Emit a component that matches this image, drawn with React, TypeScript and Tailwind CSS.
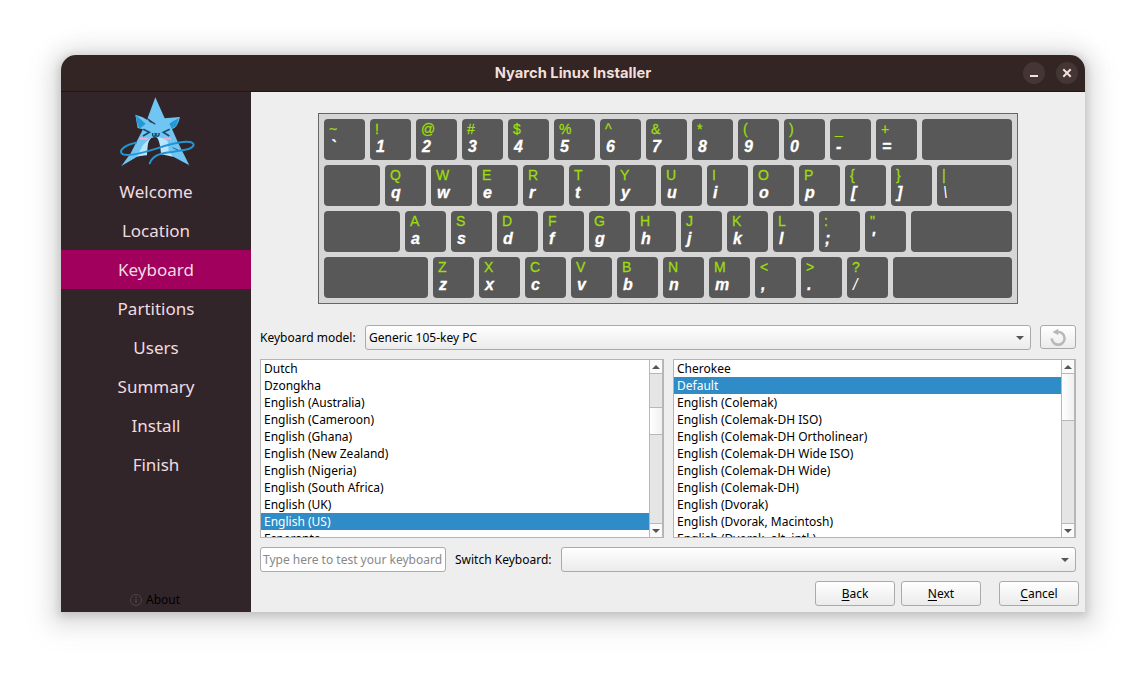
import React from "react";

const steps = ["Welcome", "Location", "Keyboard", "Partitions", "Users", "Summary", "Install", "Finish"];

const layouts = [
  "Dutch", "Dzongkha", "English (Australia)", "English (Cameroon)", "English (Ghana)",
  "English (New Zealand)", "English (Nigeria)", "English (South Africa)", "English (UK)",
  "English (US)", "Esperanto",
];

const variants = [
  "Cherokee", "Default", "English (Colemak)", "English (Colemak-DH ISO)",
  "English (Colemak-DH Ortholinear)", "English (Colemak-DH Wide ISO)", "English (Colemak-DH Wide)",
  "English (Colemak-DH)", "English (Dvorak)", "English (Dvorak, Macintosh)", "English (Dvorak, alt. intl.)",
];

type KeyRow = { lead?: string; keys: string[]; last?: string };

const rows: KeyRow[] = [
  { keys: ["~`", "!1", "@2", "#3", "$4", "%5", "^6", "&7", "*8", "(9", ")0", "_-", "+="] },
  { lead: "w-14", keys: ["Qq", "Ww", "Ee", "Rr", "Tt", "Yy", "Uu", "Ii", "Oo", "Pp", "{[", "}]"], last: "|\\" },
  { lead: "w-[76px]", keys: ["Aa", "Ss", "Dd", "Ff", "Gg", "Hh", "Jj", "Kk", "Ll", ":;", "\"'"] },
  { lead: "w-[104px]", keys: ["Zz", "Xx", "Cc", "Vv", "Bb", "Nn", "Mm", "<,", ">.", "?/"] },
];

function Key({ chars = "", size }: { chars?: string; size: string }) {
  const thin = chars[1] === "\\" || chars[1] === "/";
  return (
    <div className={`h-[41px] rounded-[4px] bg-[#585858] pl-[5px] pt-[2px] font-['Liberation_Sans',sans-serif] ${size}`}>
      {chars && (
        <>
          <div className="h-[17px] text-[14px] leading-[17px] text-[#9bdc0c] [-webkit-text-stroke:0.3px_#9bdc0c]">{chars[0]}</div>
          <div className={`h-[18px] pl-px text-[16px] italic leading-[18px] text-white ${thin ? "" : "font-bold [-webkit-text-stroke:0.3px_white]"}`}>{chars[1]}</div>
        </>
      )}
    </div>
  );
}

function Logo() {
  return (
    <svg className="ml-[49px] block h-[81px] w-[90px] shrink-0" viewBox="0 0 270 243" fill="none">
      <path d="M136 16 L164 79 L210 75 Q202 108 186 111 L205 154 L238 220 L190 194 L150 174 L146 150 L136 134 L124 140 L113 158 L111 187 L80 195 L34 222 L62 184 L99 112 L83 108 L76 68 L98 76 L111 83Z" fill="#70c5f2" />
      <path d="M120 139 L146 136 L163 140 L173 148 L176 176 L189 194 L150 186 L151 165 Q148 134 136 134 Q118 139 114 154 L111 190 L82 192 L99 159 Z" fill="#b9e5fd" />
      <path d="M124 138 Q113 147 113 170 L111 190 Q125 182 153 184 L150 162 Q144 134 136 135Z" fill="#322529" />
      <path d="M78 70 L107 95 L89 110Q80 98 78 70ZM207 78 Q190 86 178 95 L185 110 L198 102Z" fill="#2499d6" />
      <path d="M109 76 L136 97 L119 90Z" fill="#322529" />
      <path d="M113 81 L136 97" stroke="#23485f" strokeWidth="3.5" />
      <path d="M100 112 L118 121 L99 132M179 112 L160 121 L178 132" stroke="#174f70" strokeWidth="5" />
      <path d="M128 123V130Q132 137 137 129Q143 137 147 129V123M133 125H142" stroke="#174f70" strokeWidth="4.5" />
      <path d="M91 140H111M163 140H181" stroke="#f0b0d6" strokeWidth="5" strokeLinecap="round" />
      <path d="M78 152C48 158 27 173 35 184C45 196 101 182 139 170C189 153 222 145 244 151C261 158 244 171 222 174L185 180C150 183 128 191 119 214" stroke="#2295d2" strokeWidth="6" strokeLinecap="round" />
      <path d="M188 167 L204 174M34 217 L38 224M232 217L238 221" stroke="#235374" strokeWidth="2.5" />
    </svg>
  );
}

function Arrow({ up = false }: { up?: boolean }) {
  return (
    <svg className="block h-1 w-2" viewBox="0 0 8 4">
      <path d={up ? "M0 4L4 0L8 4Z" : "M0 0H8L4 4Z"} fill="#555" />
    </svg>
  );
}

function ListBox({ items, selected, size, above, thumb }: { items: string[]; selected: number; size: string; above: string; thumb: string }) {
  return (
    <div className={`flex h-[179px] overflow-hidden border border-[#b4b4b4] bg-white ${size}`}>
      <div className="min-w-0 flex-1 overflow-hidden">
        {items.map((t, i) => (
          <div key={t} className={`h-[17px] whitespace-pre pl-[3px] leading-[17px] ${i === selected ? "bg-[#308cc6] text-white" : ""}`}>{t}</div>
        ))}
      </div>
      <div className="flex w-[14px] flex-col border-x border-[#b8b8b8] bg-[#e5e5e5]">
        <div className="flex h-[14px] shrink-0 items-center justify-center border-b border-[#b8b8b8] bg-[#fafafa]"><Arrow up /></div>
        <div className={above} />
        <div className={`shrink-0 border-[#b8b8b8] bg-linear-to-r from-white to-[#f0f0f0] ${thumb}`} />
        <div className="flex-1" />
        <div className="flex h-[14px] shrink-0 items-center justify-center border-t border-[#b8b8b8] bg-[#fafafa]"><Arrow /></div>
      </div>
    </div>
  );
}

const control = "rounded-[3px] border border-[#aaa] bg-linear-to-b from-white to-[#ebebeb]";

function Button({ label, gap = "" }: { label: string; gap?: string }) {
  return (
    <button className={`h-[25px] w-20 text-center leading-[23px] ${control} ${gap}`}>
      <span className="underline underline-offset-2">{label[0]}</span>{label.slice(1)}
    </button>
  );
}

export default function App() {
  return (
    <div className="h-[679px] w-[1146px] overflow-hidden bg-white pl-[61px] pt-[55px] font-['Noto_Sans',sans-serif] text-[12px] text-black">
      <div className="flex h-[557px] w-[1024px] flex-col overflow-hidden rounded-t-[15px] bg-[#eee] shadow-[0_2px_8px_2px_rgba(0,0,0,0.14),0_3px_20px_10px_rgba(0,0,0,0.09),0_6px_32px_16px_rgba(0,0,0,0.04)]">
        <header className="flex h-[37px] shrink-0 items-center border-b border-[#1f1717] bg-[#322523]">
          <div className="w-[70px]" />
          <h1 className="flex-1 text-center font-['Inter',sans-serif] text-[14.72px] font-bold text-[#f2dfda]">Nyarch Linux Installer</h1>
          <div className="flex w-[70px] gap-[11px] pl-2">
            <button className="flex size-[22px] items-center justify-center rounded-full bg-[#433634]">
              <svg className="size-4" viewBox="0 0 16 16"><path d="M4 11H12" stroke="#f4dfda" strokeWidth="2" /></svg>
            </button>
            <button className="flex size-[22px] items-center justify-center rounded-full bg-[#433634]">
              <svg className="size-4" viewBox="0 0 16 16"><path d="M5 5L11 11M11 5L5 11" stroke="#f4dfda" strokeWidth="2" strokeLinecap="square" /></svg>
            </button>
          </div>
        </header>
        <div className="flex min-h-0 flex-1">
          <aside className="flex w-[190px] flex-col bg-[#322529]">
            <div className="h-20 shrink-0"><Logo /></div>
            {steps.map((s) => (
              <div key={s} className={`h-[39px] shrink-0 text-center text-[17px] leading-[40px] text-[#f0dce0] ${s === "Keyboard" ? "bg-[#a1005c]" : ""}`}>{s}</div>
            ))}
            <div className="mt-auto flex h-[25px] items-center justify-center gap-1 pr-[2px]">
              <svg className="size-3" viewBox="0 0 12 12" fill="none" stroke="#4d4347"><circle cx="6" cy="6" r="5.5" /><path d="M6 5V9M6 2.5V4" strokeWidth="1.4" /></svg>
              <span>About</span>
            </div>
          </aside>
          <main className="flex flex-1 flex-col pl-[9px] pt-[21px]">
            <section className="ml-[58px] flex h-[191px] w-[700px] flex-col gap-[5px] border border-[#666] bg-[#d6d6d6] p-[5px]">
              {rows.map((r, i) => (
                <div key={i} className="flex gap-[5px]">
                  {r.lead && <Key size={r.lead} />}
                  {r.keys.map((k) => <Key key={k} chars={k} size="w-[41px]" />)}
                  <Key chars={r.last} size="flex-1" />
                </div>
              ))}
            </section>
            <div className="mt-[21px] flex h-[25px]">
              <label className="w-[105px] leading-[25px]">Keyboard model:</label>
              <div className={`flex w-[666px] items-center justify-between pl-[3px] pr-1.5 ${control}`}>
                <span>Generic 105-key PC</span><Arrow />
              </div>
              <button className={`ml-[9px] flex h-6 w-9 items-center justify-center ${control}`}>
                <svg className="size-[18px]" viewBox="0 0 18 18" fill="none"><path d="M8.5 4H9.2A6.4 6.4 0 1 1 2.8 10.4" stroke="#b8b8b8" strokeWidth="2.6" /><path d="M3.5 4L9.3 0.7V7.3Z" fill="#b8b8b8" /></svg>
              </button>
            </div>
            <div className="mt-[9px] flex gap-[9px]">
              <ListBox items={layouts} selected={9} size="w-[404px]" above="h-[33px]" thumb="h-7 border-y" />
              <ListBox items={variants} selected={1} size="w-[403px]" above="h-0" thumb="h-[47px] border-b" />
            </div>
            <div className="mt-[9px] flex h-[25px]">
              <div className="w-[186px] whitespace-pre rounded-[3px] border border-[#aaa] bg-white pl-[2px] leading-[23px] text-[#888]">Type here to test your keyboard</div>
              <label className="ml-[9px] w-[106px] leading-[25px]">Switch Keyboard:</label>
              <div className={`flex w-[515px] items-center justify-end pr-1.5 ${control}`}><Arrow /></div>
            </div>
            <div className="mt-[9px] flex pl-[555px]">
              <Button label="Back" />
              <Button label="Next" gap="ml-1.5" />
              <Button label="Cancel" gap="ml-[18px]" />
            </div>
          </main>
        </div>
      </div>
    </div>
  );
}
